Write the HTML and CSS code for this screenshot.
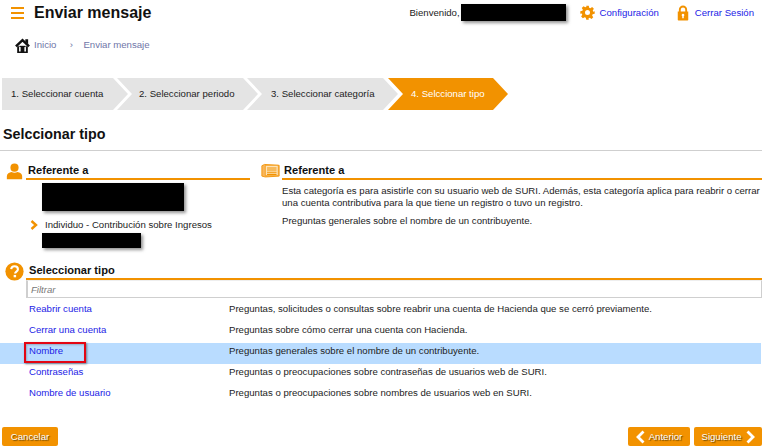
FILE: index.html
```html
<!DOCTYPE html>
<html lang="es">
<head>
<meta charset="utf-8">
<title>Enviar mensaje</title>
<link rel="stylesheet" href="styles.css">
</head>
<body>
<header class="top">
  <div class="menu-icon"><span></span><span></span><span></span></div>
  <h1 class="page-title">Enviar mensaje</h1>
  <div class="user-bar">
    <span class="welcome">Bienvenido,</span><span class="redact redact-user"></span>
    <svg class="ico-gear" viewBox="0 0 24 24"><path fill="#f29200" d="M10 1h4l.7 3.2 1.900.8 2.800-1.800 2.800 2.800-1.800 2.800.8 1.900L23.500 10v4l-3.300.7-.8 1.900 1.800 2.800-2.800 2.800-2.800-1.800-1.900.8L14 23.500h-4l-.7-3.300-1.900-.8-2.800 1.800-2.800-2.800 1.800-2.800-.8-1.900L.5 14v-4l3.300-.7.8-1.900L2.800 4.600 5.600 1.800l2.800 1.800 1.900-.8zM12 8a4 4 0 1 0 0 8 4 4 0 0 0 0-8z" fill-rule="evenodd"/></svg>
    <a class="link top-link">Configuración</a>
    <svg class="ico-lock" viewBox="0 0 16 20"><path fill="#f29200" fill-rule="evenodd" d="M1 8h1.500V5.500a5.500 5.500 0 0 1 11 0V8H15v11a1 1 0 0 1-1 1H2a1 1 0 0 1-1-1zM5 8h6V5.500a3 3 0 0 0-6 0zM8 11a1.800 1.800 0 0 0-1 3.300V17h2v-2.700A1.800 1.800 0 0 0 8 11z"/></svg>
    <a class="link top-link logout">Cerrar Sesión</a>
  </div>
</header>

<nav class="crumbs">
  <svg class="ico-home" viewBox="0 0 24 24"><path fill="none" stroke="#111" stroke-width="4" d="M1.500 13.500 12 3.500l10.500 10"/><path fill="#111" d="M16.500 2H21v8l-4.500-4z"/><path fill="none" stroke="#111" stroke-width="3" d="M5 13v10h5.500v-7h3v7H19V13"/><path stroke="#111" stroke-width="2" d="M7 13.500h10"/></svg>
  <a class="crumb">Inicio</a>
  <span class="crumb-sep">›</span>
  <a class="crumb">Enviar mensaje</a>
</nav>

<ol class="steps">
  <li class="step step-1">1. Seleccionar cuenta</li>
  <li class="step step-2">2. Seleccionar periodo</li>
  <li class="step step-3">3. Seleccionar categoría</li>
  <li class="step step-4">4. Selccionar tipo</li>
</ol>

<h2 class="section-title">Selccionar tipo</h2>

<section class="panels">
  <div class="panel panel-left">
    <svg class="ico-user" viewBox="0 0 20 20"><circle cx="10" cy="5.500" r="4.800" fill="#f29200"/><path fill="#f29200" d="M1 19v-3.500C1 12.500 4 10.800 6.500 10.500c2 1.300 5 1.300 7 0 2.500.3 5.500 2 5.500 5V19z"/></svg>
    <h3 class="panel-head head-left">Referente a</h3>
    <div class="panel-body body-left">
      <div class="redact redact-a"></div>
      <div class="tax-row">
        <svg class="ico-chev" viewBox="0 0 8 10"><path d="M1.500 1 6 5l-4.500 4" fill="none" stroke="#f29200" stroke-width="2.400"/></svg>
        <span>Individuo - Contribución sobre Ingresos</span>
      </div>
      <div class="redact redact-b"></div>
    </div>
  </div>
  <div class="panel panel-right">
    <svg class="ico-note" viewBox="0 0 22 16"><path fill="#f9b65c" stroke="#f29200" d="M1 2.500 4 1l17 1v12.500l-16 1-4-1z"/><path fill="#fde3b8" stroke="#f29200" stroke-width=".8" d="M5 2h15v12H5z"/><path stroke="#f29200" stroke-width="1.200" d="M7 5h11M7 7.500h11M7 10h11M7 12.500h11"/></svg>
    <h3 class="panel-head head-right">Referente a</h3>
    <div class="panel-body body-right">
      <p class="desc">Esta categoría es para asistirle con su usuario web de SURI. Además, esta categoría aplica para reabrir o cerrar<br>una cuenta contributiva para la que tiene un registro o tuvo un registro.</p>
      <p class="desc">Preguntas generales sobre el nombre de un contribuyente.</p>
    </div>
  </div>
</section>

<section class="type-section">
  <svg class="ico-help" viewBox="0 0 20 20"><circle cx="10" cy="10" r="9.600" fill="#f29200"/><path d="M6.500 7.500C6.700 5.500 8.200 4.500 10 4.500c2.100 0 3.600 1.200 3.600 3 0 2.600-3 2.500-3 4.700" fill="none" stroke="#fff" stroke-width="2.200"/><rect x="9.100" y="13.600" width="2.600" height="2.500" fill="#fff"/></svg>
  <h3 class="panel-head head-type">Seleccionar tipo</h3>
  <div class="filter">Filtrar</div>
  <div class="rows">
    <div class="row"><a class="link">Reabrir cuenta</a><span>Preguntas, solicitudes o consultas sobre reabrir una cuenta de Hacienda que se cerró previamente.</span></div>
    <div class="row"><a class="link">Cerrar una cuenta</a><span>Preguntas sobre cómo cerrar una cuenta con Hacienda.</span></div>
    <div class="row row-on"><a class="link">Nombre</a><span>Preguntas generales sobre el nombre de un contribuyente.</span><i class="mark"></i></div>
    <div class="row"><a class="link">Contraseñas</a><span>Preguntas o preocupaciones sobre contraseñas de usuarios web de SURI.</span></div>
    <div class="row"><a class="link">Nombre de usuario</a><span>Preguntas o preocupaciones sobre nombres de usuarios web en SURI.</span></div>
  </div>
</section>

<footer class="actions">
  <button class="btn btn-cancel">Cancelar</button>
  <button class="btn btn-prev"><svg class="btn-chev" viewBox="0 0 9 14"><path d="M7.500 1.500 2 7l5.500 5.500" fill="none" stroke="#fff" stroke-width="2.800"/></svg>Anterior</button>
  <button class="btn btn-next">Siguiente<svg class="btn-chev" viewBox="0 0 9 14"><path d="M1.500 1.500 7 7l-5.500 5.500" fill="none" stroke="#fff" stroke-width="2.800"/></svg></button>
</footer>
</body>
</html>
```

FILE: styles.css
```css
* { box-sizing: border-box; }
html, body { margin: 0; padding: 0; }
body {
  width: 765px;
  height: 448px;
  overflow: hidden;
  background: #fff;
  color: #1c1c1c;
  font-family: "Liberation Sans", Arial, sans-serif;
  font-size: 9.6px;
  line-height: 12px;
}
h1, h2, h3, p, ol { margin: 0; padding: 0; }
.link { color: #1c1ce6; }

.top { display: flex; align-items: center; height: 25px; padding-left: 11px; }
.menu-icon { display: flex; flex-direction: column; gap: 3px; width: 13px; }
.menu-icon span { height: 2px; background: #f29200; }
.page-title { margin-left: 10px; font-size: 16px; line-height: 25px; font-weight: 700; color: #111; }
.user-bar { display: flex; align-items: center; margin-left: auto; padding-right: 11px; }
.welcome { margin-right: 1px; }
.redact { background: #000; box-shadow: 2px 2px 3px rgba(60, 60, 60, .55); }
.redact-user { width: 105px; height: 17px; }
.ico-gear { width: 15px; height: 15px; margin-left: 14px; }
.top-link { margin-left: 5px; }
.ico-lock { width: 12px; height: 16px; margin-left: 18px; }
.logout { margin-left: 6px; }

.crumbs { display: flex; align-items: center; height: 16px; margin-top: 12px; padding-left: 15px; }
.ico-home { width: 15px; height: 15px; }
.crumb { color: #6f76a8; margin-left: 4px; }
.crumb-sep { color: #6f76a8; width: 22px; margin-left: 4px; margin-right: -3px; text-align: center; }

.steps { display: flex; list-style: none; height: 32px; margin-top: 25px; margin-left: 2px; }
.step {
  display: flex;
  align-items: center;
  height: 32px;
  background: #e4e4e4;
  color: #1c1c1c;
  clip-path: polygon(0 0, calc(100% - 15px) 0, 100% 50%, calc(100% - 15px) 100%, 0 100%, 15px 50%);
}
.step-1 { width: 126px; padding-left: 9px; clip-path: polygon(0 0, calc(100% - 15px) 0, 100% 50%, calc(100% - 15px) 100%, 0 100%); }
.step-2 { width: 141px; margin-left: -11px; padding-left: 22px; }
.step-3 { width: 151px; margin-left: -11px; padding-left: 24px; }
.step-4 { width: 120px; margin-left: -10px; padding-left: 23px; background: #f29200; color: #fff; }

.section-title { margin: 16px 0 0 3px; font-size: 14.3px; line-height: 16px; font-weight: 700; color: #111; }

.panels {
  display: grid;
  grid-template-columns: 250px 1fr;
  width: 762px;
  margin-top: 8px;
  border-top: 1px solid #cfcfcf;
  padding-top: 10px;
}
.panel { position: relative; }
.panel-left { padding-left: 26px; }
.panel-right { padding-left: 32px; }
.panel-head { height: 19px; padding-top: 2px; border-bottom: 2px solid #f29200; font-size: 11.1px; line-height: 14px; font-weight: 700; color: #111; }
.head-left, .head-right { padding-left: 2px; }
.ico-user { position: absolute; left: 6px; top: 2px; width: 17px; height: 17px; }
.ico-note { position: absolute; left: 11px; top: 2px; width: 19px; height: 15px; }
.body-left { padding: 3px 0 0 16px; }
.redact-a { width: 142px; height: 28px; }
.tax-row { display: flex; align-items: center; height: 14px; margin: 7px 0 0 -12px; }
.ico-chev { width: 8px; height: 10px; margin-right: 7px; }
.redact-b { width: 99px; height: 15px; margin-top: 1px; }
.body-right { padding-top: 5px; }
.desc { margin-bottom: 6px; white-space: nowrap; }

.type-section { position: relative; width: 762px; margin-top: 14px; padding-left: 26px; }
.ico-help { position: absolute; left: 5px; top: 0; width: 19px; height: 19px; }
.head-type { height: 18px; padding-top: 1px; padding-left: 3px; }
.filter {
  height: 18px;
  padding: 3px 3px 1px;
  border: 1px solid #cfcfcf;
  border-top-color: #eee;
  border-left-width: 2px;
  font-style: italic;
  color: #777;
}
.rows { margin: 3px 0 0 -26px; width: 761px; }
.row { position: relative; display: flex; align-items: center; height: 21px; padding: 0 0 5px 29px; }
.row .link { width: 200px; }
.row-on { background: #b9dcff; }
.mark {
  position: absolute;
  left: 24px;
  top: -1px;
  width: 62px;
  height: 21px;
  border: 2px solid #e30613;
  box-shadow: 1px 1px 2px rgba(60, 60, 60, .6), inset 1px 1px 2px rgba(60, 60, 60, .3);
}

.actions { display: flex; gap: 4px; margin-top: 21px; padding: 0 3px 0 2px; }
.btn {
  display: flex;
  align-items: center;
  justify-content: center;
  height: 19px;
  padding: 0;
  border: 0;
  border-radius: 2px;
  background: #f29200;
  color: #fff;
  font: 9.6px/12px "Liberation Sans", Arial, sans-serif;
  text-shadow: 1px 1px 1px rgba(70, 50, 0, .8);
}
.btn-cancel { width: 56px; margin-right: auto; }
.btn-prev { width: 62px; gap: 4px; }
.btn-next { width: 68px; gap: 4px; }
.btn-chev { width: 9px; height: 14px; }
```
